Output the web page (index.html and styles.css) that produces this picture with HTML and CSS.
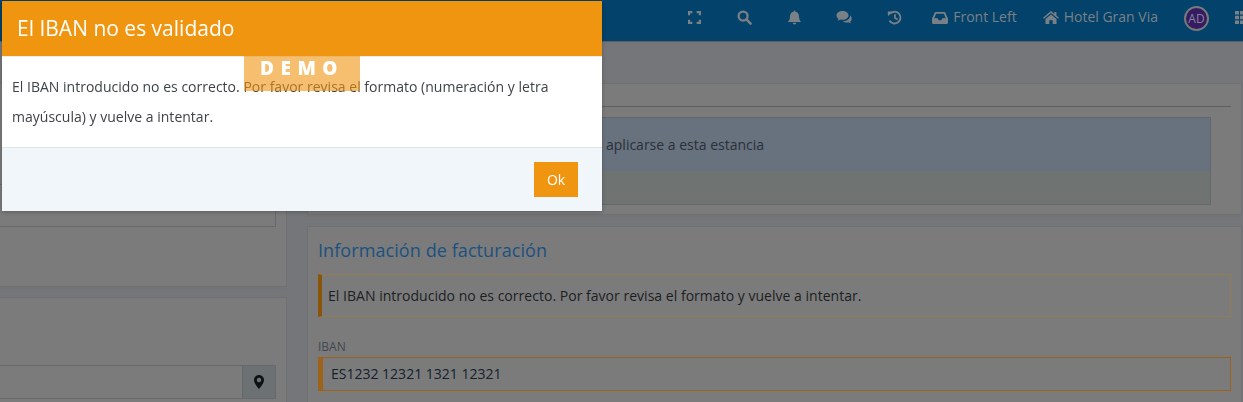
FILE: index.html
```html
<!DOCTYPE html>
<html lang="es">
<head>
<meta charset="utf-8">
<title>El IBAN no es validado</title>
<link rel="stylesheet" href="styles.css">
</head>
<body>
<header class="topbar">
  <nav class="nav-icons">
    <a class="nav-btn"><svg class="ico ico-expand" viewBox="0 0 12 12"><path d="M1 4V1h3M8 1h3v3M11 8v3H8M4 11H1V8" fill="none" stroke="currentColor" stroke-width="2"/></svg></a>
    <a class="nav-btn"><svg class="ico" viewBox="0 0 16 16"><circle cx="6.500" cy="6.500" r="4.800" fill="none" stroke="currentColor" stroke-width="2.400"/><path d="M10 10l4.500 4.500" stroke="currentColor" stroke-width="2.800" stroke-linecap="round"/></svg></a>
    <a class="nav-btn"><svg class="ico" viewBox="0 0 16 16"><path d="M8 0.500c.6 0 1 .4 1 1v.4c2.400.5 3.800 2.400 3.800 4.800 0 3.500 1 4.800 2.200 6H1c1.200-1.200 2.200-2.500 2.200-6C3.200 4.300 4.600 2.400 7 1.900v-.4c0-.6.400-1 1-1zM6.200 13.700h3.600c0 1-.8 1.800-1.800 1.800s-1.800-.8-1.800-1.800z" fill="currentColor"/></svg></a>
    <a class="nav-btn"><svg class="ico ico-chat" viewBox="0 0 17 14"><path d="M6.500 1C3 1 .5 3 .5 5.400c0 1.400.8 2.600 2 3.400-.2.700-.6 1.300-1.100 1.800 1.100-.1 2.100-.6 2.900-1.200.7.200 1.400.3 2.200.3 3.500 0 6-2 6-4.300S10 1 6.500 1z" fill="currentColor"/><path d="M14 5.200c.1.300.1.500.1.800 0 2.900-3 5-6.600 5l-.9-.1c.9.900 2.400 1.500 4.100 1.500.6 0 1.200-.1 1.800-.2.600.5 1.400.9 2.400 1-.4-.4-.7-.9-.9-1.500 1-.6 1.700-1.600 1.700-2.800 0-1.500-.6-2.800-1.700-3.700z" fill="currentColor"/></svg></a>
    <a class="nav-btn"><svg class="ico" viewBox="0 0 16 16"><path d="M3.300 4A6.300 6.300 0 1 1 2.600 11.200" fill="none" stroke="currentColor" stroke-width="2"/><path d="M0.800 1.500l5.400.2-5.200 5z" fill="currentColor"/><path d="M8.500 4.500v4l2.800 1.700" fill="none" stroke="currentColor" stroke-width="1.800"/></svg></a>
  </nav>
  <a class="nav-link"><svg class="ico-link" viewBox="0 0 16 13"><path d="M3.600 1h8.800c.4 0 .7.200.9.500L15.700 7c.2.300.3.600.3 1v3.500c0 .8-.6 1.500-1.500 1.500h-13C.7 13 0 12.300 0 11.500V8c0-.4.100-.7.300-1l2.400-5.500c.2-.3.500-.5.900-.5zm.5 1.800L2.300 7.300h3.400l1 2h2.600l1-2h3.400l-1.800-4.500z" fill="currentColor" fill-rule="evenodd"/></svg>Front Left</a>
  <a class="nav-link"><svg class="ico-link" viewBox="0 0 16 13"><path d="M8 0L0 6.700l.9 1L8 1.900l7.100 5.800.9-1-2.600-2.200V1h-2v1.900zM2.500 8v5h3.800V9.300h3.400V13h3.800V8L8 3.500z" fill="currentColor"/></svg>Hotel Gran Via</a>
  <span class="avatar">AD</span>
  <svg class="grid-ico" viewBox="0 0 14 13"><path d="M0 0h4v3.600H0zM5 0h4v3.600H5zM10 0h4v3.600h-4zM0 4.700h4v3.600H0zM5 4.700h4v3.600H5zM10 4.700h4v3.600h-4zM0 9.400h4V13H0zM5 9.400h4V13H5zM10 9.400h4V13h-4z" fill="currentColor"/></svg>
</header>

<main class="content">
  <div class="col-left">
    <section class="panel panel-a">
      <div class="box-field"></div>
    </section>
    <section class="panel panel-b">
      <div class="input-group">
        <div class="input-main"></div>
        <div class="input-addon"><svg class="pin" viewBox="0 0 10 14"><path d="M5 0C2.200 0 0 2.200 0 5c0 3.300 3.500 7 5 9 1.500-2 5-5.700 5-9 0-2.800-2.200-5-5-5zm0 7.200A2.200 2.200 0 1 1 5 2.800a2.200 2.200 0 0 1 0 4.400z" fill="currentColor" fill-rule="evenodd"/></svg></div>
      </div>
    </section>
  </div>
  <div class="col-right">
    <section class="panel panel-c">
      <div class="rule"></div>
      <div class="info-box">
        <div class="info-top">aplicarse a esta estancia</div>
      </div>
    </section>
    <section class="panel panel-d">
      <h2 class="section-title">Información de facturación</h2>
      <div class="alert">El IBAN introducido no es correcto. Por favor revisa el formato y vuelve a intentar.</div>
      <label class="field-label">IBAN</label>
      <div class="iban-input">ES1232 12321 1321 12321</div>
    </section>
  </div>
</main>

<div class="modal">
  <div class="modal-head">El IBAN no es validado</div>
  <div class="modal-body">El IBAN introducido no es correcto. Por favor revisa el formato (numeración y letra mayúscula) y vuelve a intentar.</div>
  <div class="modal-foot"><button class="ok-btn">Ok</button></div>
  <div class="demo">DEMO</div>
</div>
</body>
</html>
```

FILE: styles.css
```css
* { box-sizing: border-box; }
html, body { margin: 0; height: 100%; overflow: hidden; }
body {
  background: #757679;
  font-family: "Open Sans", "Noto Sans", sans-serif;
  font-size: 14px;
  color: #1e2226;
}

.topbar {
  height: 42px;
  background: #02426b;
  border-bottom: 1px solid #555f68;
  display: flex;
  align-items: center;
  justify-content: flex-end;
  gap: 26px;
  margin-right: -6px;
  padding-bottom: 7px;
  color: #7a8186;
}
.nav-icons { display: flex; margin-right: -13px; }
.nav-btn { width: 50px; height: 16px; display: flex; justify-content: center; align-items: center; }
.ico { width: 15px; height: 15px; display: block; }
.ico-expand { width: 13px; height: 13px; }
.ico-chat { width: 17px; height: 14px; }
.ico-link { width: 16px; height: 13px; display: block; }
.nav-link { display: flex; align-items: center; gap: 5px; line-height: 20px; }
.avatar {
  width: 25px;
  height: 25px;
  border-radius: 50%;
  border: 2px solid #78797c;
  background: #351c60;
  color: #8a829e;
  font-size: 12px;
  display: flex;
  align-items: center;
  justify-content: center;
  margin-top: 2px;
}
.grid-ico { width: 14px; height: 13px; }

.content { display: flex; gap: 20px; padding-top: 41px; }
.col-left { width: 287px; flex: none; display: flex; flex-direction: column; gap: 10px; }
.col-right { flex: 1; display: flex; flex-direction: column; gap: 11px; padding-right: 1px; }

.panel {
  background: #7b7b7b;
  border: 1px solid #6e7072;
  box-shadow: 0 2px 0 #727476;
}
.panel-a { height: 204px; padding: 100px 10px 0 0; border-left: 0; }
.box-field { height: 43px; border: 1px solid #67696c; border-left: 0; }
.panel-b { height: 120px; padding: 67px 10px 0 0; border-left: 0; }
.input-group { display: flex; height: 34px; border: 1px solid #67696c; border-left: 0; }
.input-main { flex: 1; }
.input-addon {
  width: 33px;
  background: #6c7174;
  border-left: 1px solid #64686b;
  display: flex;
  align-items: center;
  justify-content: center;
  color: #0e1215;
}
.pin { width: 10px; height: 14px; }

.panel-c { height: 132px; padding: 22px 10px 0; }
.rule { height: 1px; background: #5f6061; }
.info-box {
  margin: 10px 20px 0 0;
  height: 88px;
  background: #6f7472;
  border: 1px solid #646769;
}
.info-top {
  height: 53px;
  background: #68727e;
  color: #28303a;
  line-height: 53px;
  padding-left: 287px;
}

.panel-d { height: 190px; padding: 9px 10px 0; }
.section-title {
  margin: 0;
  font-size: 18px;
  font-weight: 400;
  line-height: 28px;
  letter-spacing: .08px;
  color: #1b5180;
}
.alert {
  margin-top: 10px;
  height: 43px;
  line-height: 41px;
  border: 1px solid #927b55;
  border-left: 4px solid #8a5409;
  padding-left: 6px;
  letter-spacing: .024px;
  color: #1b1f24;
}
.field-label {
  display: block;
  margin-top: 21px;
  font-size: 12px;
  line-height: 18px;
  color: #43474c;
}
.iban-input {
  margin-top: 1px;
  height: 34px;
  line-height: 32px;
  border: 1px solid #9a621c;
  border-left: 5px solid #9c6319;
  padding-left: 8px;
  color: #13202e;
}

.modal {
  position: fixed;
  left: 2px;
  top: 1px;
  width: 600px;
  height: 210px;
  background: #fff;
  display: flex;
  flex-direction: column;
  box-shadow: 0 1px 4px rgba(0, 0, 0, .25);
}
.modal-head {
  height: 55px;
  background: #f0950f;
  color: #fff;
  font-size: 21px;
  line-height: 55px;
  padding-left: 15px;
}
.modal-body {
  height: 91px;
  padding: 15px 10px 0;
  line-height: 30px;
  letter-spacing: .014px;
  color: #3f4347;
  border-top: 1px solid #e6ecf1;
}
.modal-foot {
  flex: 1;
  background: #f1f6fa;
  border-top: 1px solid #dfe5ea;
  display: flex;
  justify-content: flex-end;
  align-items: flex-start;
  padding: 14px 24px 0 0;
}
.ok-btn {
  width: 44px;
  height: 35px;
  border: 0;
  background: #f0950f;
  color: #fff;
  font: inherit;
  padding: 0;
}
.demo {
  position: absolute;
  left: 242px;
  top: 55px;
  width: 116px;
  height: 35px;
  background: rgba(240, 149, 15, .6);
  color: #fff;
  font-family: "Open Sans", sans-serif;
  font-weight: 800;
  font-size: 19px;
  letter-spacing: 6.500px;
  line-height: 25px;
  text-align: center;
}
```
